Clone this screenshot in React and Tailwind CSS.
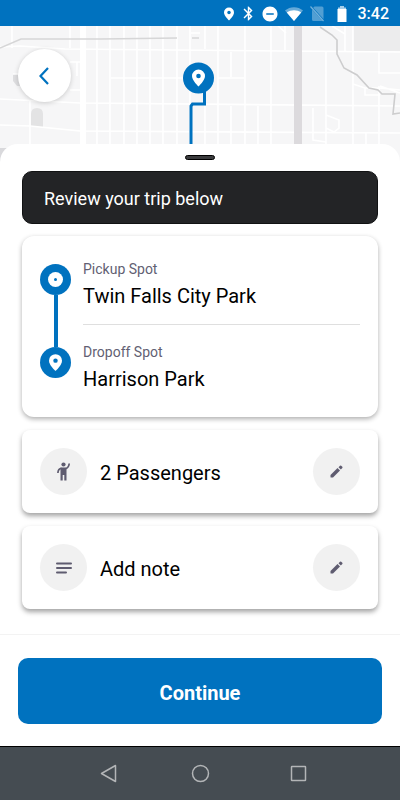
import React from "react";
import { MdBluetooth, MdDoNotDisturbOn } from "react-icons/md";

const BLUE = "#0072bf";

function Pin({ className, dot = BLUE }) {
  return (
    <svg viewBox="0 0 14 18" className={className} aria-hidden="true">
      <path d="M7 0a7 7 0 0 0-7 7c0 5 7 11 7 11s7-6 7-11a7 7 0 0 0-7-7z" fill="#fff" />
      <circle cx="7" cy="7" r="2.400" fill={dot} />
    </svg>
  );
}

function StatusBar() {
  return (
    <header className="flex h-[26px] items-center justify-end bg-[#0072bf] pt-px pr-[11px] text-white">
      <Pin className="mr-[6px] h-[14px] w-[10px]" />
      <MdBluetooth className="mr-[4px] h-[17px] w-[17px]" aria-hidden="true" />
      <MdDoNotDisturbOn className="mr-[6px] h-[18px] w-[18px]" aria-hidden="true" />
      <svg viewBox="0 0 18 14" className="mr-[7px] h-[14px] w-[18px]" aria-hidden="true">
        <path d="M0 3.500C5-1 13-1 18 3.500L9 14z" fill="#fff" opacity=".4" />
        <path d="M1.800 5.600C6 2.500 12 2.500 16.200 5.600L9 14z" fill="#fff" />
      </svg>
      <svg viewBox="0 0 15 17" className="mr-[12px] h-[17px] w-[15px]" aria-hidden="true">
        <path d="M4.500 1.500H12q1.500 0 1.500 1.500v11L3.200 2.800zM2 4.500l10.500 11.500H3.500q-1.500 0-1.500-1.500z" fill="#fff" opacity=".32" />
        <path d="M.5 1.500l13 14.500" stroke="#fff" strokeWidth="1.200" opacity=".45" />
      </svg>
      <svg viewBox="0 0 10 16" className="mr-[11px] h-[16px] w-[10px]" aria-hidden="true">
        <path d="M3 0h4v1.500h2V3H1V1.500h2z" fill="#fff" opacity=".65" />
        <path d="M.5 3h9v13h-9z" fill="#fff" />
      </svg>
      <time className="text-base leading-5 font-medium">3:42</time>
    </header>
  );
}

function TripMap() {
  return (
    <svg
      viewBox="0 0 400 138"
      preserveAspectRatio="xMidYMid slice"
      className="block h-full w-full"
      role="img"
      aria-label="Trip map"
    >
      <rect width="400" height="138" fill="#f6f6f7" />
      <path d="M353 0h47v25h-47z" fill="#ececed" />
      <path d="M31 101V88q0-6 6-6t6 6v13z" fill="#e3e3e4" />
      <path d="M13 48h8v12h-4l-4-5z" fill="#dedee0" />
      <path d="M0 122h7v16H0z" fill="#d9d9dc" />
      <g fill="none" stroke="#fff" strokeWidth="1.600">
        <path d="M0 21l20-1 45 3 335 3M111 52h79M218 52h26M0 73l80 4 320 3M0 99l30 1 50 5 320 2" />
        <path d="M12 0v22M70 0v22M30 74v50M97 0v124M110 0v124M124 0v124M137 0v124M150 0v124M163 0v124M177 0v124M190 0v124M205 0v23M205 80v44M218 0v124M245 0v124M271 0v124M231 26v25M231 80v44M258 80v44M285 0v24" />
        <path d="M326 26v98M353 0v124M379 26v21h21M379 60v64M345 0v25M313 82v32l13 2M326 89l13 5v8l-5 4-8-4M366 107v17M70 36h12v28H70M77 36v14M13 48h10M191 7h9" />
        <path d="M353 58l12 4v7h15M365 62h15l20 2M278 0l8 7M380 60l20 7M332 0l13 8" />
      </g>
      <path d="M83 0v124" stroke="#fff" strokeWidth="6" />
      <path d="M298 0v124" stroke="#dcdadd" strokeWidth="8" />
      <path d="M0 22l21-9h80l76-1M192 12h7" fill="none" stroke="#d6d6d7" strokeWidth="1.500" />
      <path
        d="M320 1l12 8 5 5v14l7 14 13 7 12 13 9 2 4 4h13l-2 20 7-1"
        fill="none"
        stroke="#cdcdce"
        strokeWidth="1.600"
      />
      <path d="M204.500 61v17h-12l-1.500 2v50" fill="none" stroke={BLUE} strokeWidth="3" />
      <circle cx="198.500" cy="52" r="15.500" fill={BLUE} />
      <path d="M198.500 43.500a6.500 6.500 0 0 0-6.500 6.500c0 4.500 6.500 10.500 6.500 10.500s6.500-6 6.500-10.500a6.500 6.500 0 0 0-6.500-6.500z" fill="#fff" />
      <circle cx="198.500" cy="50" r="2.300" fill={BLUE} />
    </svg>
  );
}

function RouteCard() {
  return (
    <section className="mt-[12px] flex gap-[12px] rounded-xl bg-white pt-6 pr-[18px] pb-[25px] pl-[18px] shadow-[0_2px_5px_rgba(0,0,0,0.32)]">
      <div className="flex flex-col items-center pt-[4px]">
        <span className="flex size-[31px] items-center justify-center rounded-full bg-[#0072bf]">
          <span className="flex size-[15px] items-center justify-center rounded-full bg-white">
            <span className="size-[3px] rounded-full bg-[#0072bf]" />
          </span>
        </span>
        <span className="h-[52px] w-1 bg-[#0072bf]" />
        <span className="flex size-[31px] items-center justify-center rounded-full bg-[#0072bf]">
          <Pin className="h-[17px] w-[13px]" />
        </span>
      </div>
      <dl className="flex-1">
        <div className="border-b border-[#dfdfdf] pb-[15px]">
          <dt className="text-sm leading-[18px] text-[#625f73]">Pickup Spot</dt>
          <dd className="mt-[5px] text-xl leading-[26px] text-black">Twin Falls City Park</dd>
        </div>
        <div className="pt-[18px]">
          <dt className="text-sm leading-[18px] text-[#625f73]">Dropoff Spot</dt>
          <dd className="mt-[5px] text-xl leading-[26px] text-black">Harrison Park</dd>
        </div>
      </dl>
    </section>
  );
}

function OptionCard({ icon, label, action }) {
  return (
    <section className="mt-[13px] flex items-center rounded-lg bg-white px-[18px] pt-[18px] pb-[18px] shadow-[0_3px_5px_rgba(0,0,0,0.36)]">
      <span className="flex size-[47px] items-center justify-center rounded-full bg-[#f1f1f1] text-[#5f5c70]">
        {icon}
      </span>
      <h2 className="ml-[13px] flex-1 pt-[2px] text-xl leading-6 text-black">{label}</h2>
      <button
        type="button"
        aria-label={action}
        className="flex size-[47px] items-center justify-center rounded-full bg-[#f1f1f1]"
      >
        <svg viewBox="0 0 13 13" className="size-[13px]" fill="#5f5c70" aria-hidden="true">
          <path d="M.5 10L7.500 3l2.500 2.500-7 7H1q-.5 0-.5-.5z" />
          <path d="M8.500 2.200L10 .7q.6-.5 1.200 0l1.100 1.100q.5.600 0 1.200l-1.500 1.500z" />
        </svg>
      </button>
    </section>
  );
}

function SystemNav() {
  return (
    <nav className="grid grid-cols-[1fr_auto_1fr] items-center gap-[72px] border-t border-black bg-[#454c52] pt-[17px] pb-[17px]">
      <button type="button" aria-label="Back" className="justify-self-end">
        <svg viewBox="0 0 19 19" className="size-[19px]" fill="none" stroke="#b3b5b7" strokeWidth="1.500" aria-hidden="true">
          <path d="M15.500 1.500v16L1.500 9.500z" strokeLinejoin="round" />
        </svg>
      </button>
      <button type="button" aria-label="Home">
        <svg viewBox="0 0 19 19" className="size-[19px]" fill="none" stroke="#b3b5b7" strokeWidth="1.500" aria-hidden="true">
          <circle cx="9.500" cy="9.500" r="8" />
        </svg>
      </button>
      <button type="button" aria-label="Recent apps" className="ml-[8px] justify-self-start">
        <svg viewBox="0 0 17 17" className="size-[17px]" fill="none" stroke="#b3b5b7" strokeWidth="1.500" aria-hidden="true">
          <rect x="1.500" y="1.500" width="14" height="14" rx=".5" />
        </svg>
      </button>
    </nav>
  );
}

export default function App() {
  return (
    <div className="flex min-h-screen flex-col bg-white font-[Roboto,sans-serif]">
      <StatusBar />
      <div className="relative h-[138px] overflow-hidden">
        <TripMap />
        <button
          type="button"
          aria-label="Go back"
          className="absolute top-[23px] left-[18px] flex size-[53px] items-center justify-center rounded-full bg-white shadow-[0_1px_5px_rgba(0,0,0,0.18)]"
        >
          <svg viewBox="0 0 11 18" className="h-[18px] w-[11px]" fill="none" stroke={BLUE} strokeWidth="2.200" aria-hidden="true">
            <path d="M9 1L1.500 9 9 17" />
          </svg>
        </button>
      </div>
      <main className="relative -mt-5 flex flex-1 flex-col rounded-t-[18px] bg-white">
        <div className="flex-1 px-[22px] pt-[11px] pb-[25px]">
          <div className="mx-auto h-[5px] w-[30px] rounded-sm border border-black bg-[#3a3b3d]" />
          <h1 className="mt-[11px] rounded-[10px] border border-[#111213] bg-[#232426] px-[21px] pt-[15px] pb-[12px] text-lg leading-6 text-white">
            Review your trip below
          </h1>
          <RouteCard />
          <OptionCard
            icon={
              <svg viewBox="0 0 13 19" className="h-[19px] w-[13px]" fill="currentColor" aria-hidden="true">
                <circle cx="6.500" cy="2.500" r="2.100" />
                <path d="M3.500 5.500h6v13H7.300v-5.500H5.700v5.500H3.500z" />
                <path d="M12.200 1.500c-.3 2.800-1.500 4.500-3.700 5.200M4.500 6.400C2.300 6.600 1 8.300.9 11" fill="none" stroke="currentColor" strokeWidth="1.700" />
              </svg>
            }
            label="2 Passengers"
            action="Edit passengers"
          />
          <OptionCard
            icon={
              <svg viewBox="0 0 16 12" className="h-[12px] w-[16px]" fill="none" stroke="currentColor" strokeWidth="2" strokeLinecap="round" aria-hidden="true">
                <path d="M1 1.500h14M1 6h14M1 10.500h9" />
              </svg>
            }
            label="Add note"
            action="Edit note"
          />
        </div>
        <footer className="border-t border-[#f3f3f3] px-[18px] pt-[23px] pb-[22px]">
          <button
            type="button"
            className="h-[66px] w-full rounded-[10px] bg-[#0072bf] pt-[3px] text-xl font-bold text-white"
          >
            Continue
          </button>
        </footer>
      </main>
      <SystemNav />
    </div>
  );
}
